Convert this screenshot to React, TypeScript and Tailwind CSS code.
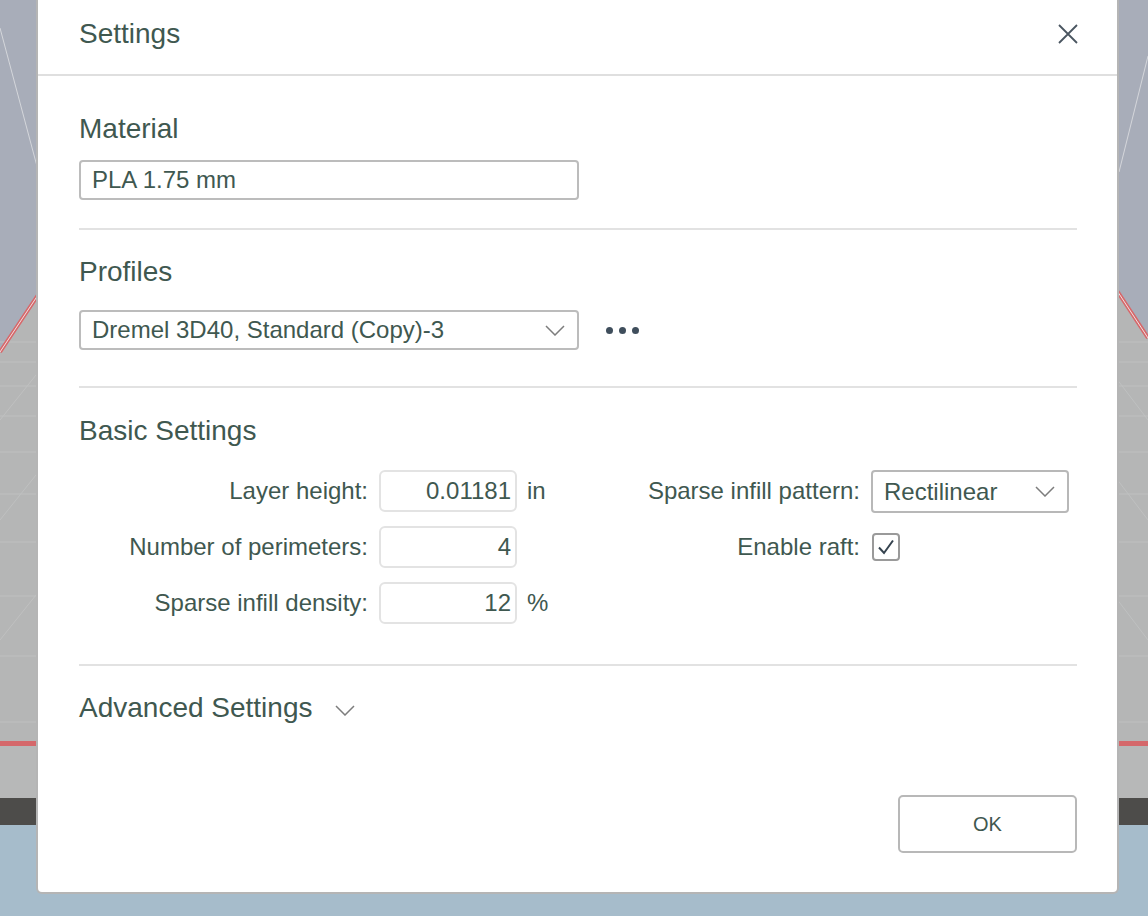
import React from "react";

const TEXT = "text-[#3f5850]";

function Chevron({ className = "" }: { className?: string }) {
  return (
    <svg width="20" height="11" viewBox="0 0 20 11" className={className}>
      <path d="M1 1 L10 10 L19 1" fill="none" stroke="#7d7d7d" strokeWidth="1.5" />
    </svg>
  );
}

function Background() {
  const hLines = [322, 342, 366, 396, 432, 474, 522, 576, 636, 702];
  return (
    <svg className="absolute inset-0" width="1148" height="916" viewBox="0 0 1148 916">
      <rect x="0" y="0" width="1148" height="916" fill="#a8adb9" />
      <polygon points="0,352 40,292 40,742 0,742" fill="#b5b6b6" />
      <polygon points="1110,280 1148,338 1148,742 1110,742" fill="#b5b6b6" />
      {hLines.map((y) => (
        <g key={y}>
          <line x1="0" y1={y + 20} x2="40" y2={y + 20} stroke="#bfc0c0" strokeWidth="1" />
          <line x1="1110" y1={y + 20} x2="1148" y2={y + 20} stroke="#bfc0c0" strokeWidth="1" />
        </g>
      ))}
      {[420, 520, 640].map((y) => (
        <g key={"d" + y}>
          <line x1="0" y1={y} x2="40" y2={y - 50} stroke="#bfc0c0" strokeWidth="1" />
          <line x1="1110" y1={y - 50} x2="1148" y2={y} stroke="#bfc0c0" strokeWidth="1" />
        </g>
      ))}
      <line x1="0" y1="352" x2="40" y2="292" stroke="#d7676a" strokeWidth="4" />
      <line x1="0" y1="352" x2="40" y2="292" stroke="#efe2e2" strokeWidth="1" />
      <line x1="1110" y1="280" x2="1148" y2="338" stroke="#d7676a" strokeWidth="4" />
      <line x1="1110" y1="280" x2="1148" y2="338" stroke="#efe2e2" strokeWidth="1" />
      <line x1="0" y1="28" x2="38" y2="170" stroke="#d4d6db" strokeWidth="1" />
      <line x1="1148" y1="56" x2="1119" y2="172" stroke="#d4d6db" strokeWidth="1" />
      <rect x="0" y="741" width="1148" height="5" fill="#d5686b" />
      <rect x="0" y="746" width="1148" height="52" fill="#b7b8b8" />
      <rect x="0" y="798" width="1148" height="27" fill="#4d4c4a" />
      <rect x="0" y="825" width="1148" height="91" fill="#a6bccb" />
    </svg>
  );
}

function Field({ value }: { value: string }) {
  return (
    <div
      className={`flex h-[42px] w-[138px] items-center justify-end rounded-[6px] border-2 border-[#e3e3e3] pr-[4px] text-[24px] leading-none ${TEXT}`}
    >
      {value}
    </div>
  );
}

export default function App() {
  return (
    <div className="relative h-[916px] w-[1148px] overflow-hidden [font-family:'Liberation_Sans',Arial,sans-serif]">
      <Background />
      <div className="relative ml-[36px] flex h-[894px] w-[1083px] flex-col rounded-b-[6px] border-x-2 border-b-2 border-[#b5b5b5] bg-white">
        <div className="flex h-[76px] items-start justify-between border-b-2 border-[#dfdfdf] pl-[41px] pr-[38px]">
          <div className={`mt-[20px] text-[28px] leading-[28px] ${TEXT}`}>Settings</div>
          <svg width="22" height="22" viewBox="0 0 22 22" className="mt-[23px]">
            <path d="M2 2 L20 20 M20 2 L2 20" stroke="#4a5560" strokeWidth="1.8" fill="none" />
          </svg>
        </div>

        <div className="flex flex-1 flex-col pl-[41px] pr-[40px]">
          <div className={`mt-[39px] text-[28px] leading-[28px] ${TEXT}`}>Material</div>
          <div
            className={`mt-[17px] flex h-[40px] w-[500px] items-center rounded-[4px] border-2 border-[#bcbcbc] pl-[11px] text-[24px] leading-none ${TEXT}`}
          >
            PLA 1.75 mm
          </div>
          <div className="mt-[28px] h-[2px] bg-[#e2e2e2]" />

          <div className={`mt-[28px] text-[28px] leading-[28px] ${TEXT}`}>Profiles</div>
          <div className="mt-[24px] flex items-center">
            <div
              className={`flex h-[40px] w-[500px] items-center justify-between rounded-[4px] border-2 border-[#bcbcbc] pl-[11px] pr-[12px] text-[24px] leading-none ${TEXT}`}
            >
              <span>Dremel 3D40, Standard (Copy)-3</span>
              <Chevron />
            </div>
            <div className="ml-[27px] flex items-center gap-[6px]">
              <span className="h-[7px] w-[7px] rounded-full bg-[#3f4e5c]" />
              <span className="h-[7px] w-[7px] rounded-full bg-[#3f4e5c]" />
              <span className="h-[7px] w-[7px] rounded-full bg-[#3f4e5c]" />
            </div>
          </div>
          <div className="mt-[36px] h-[2px] bg-[#e2e2e2]" />

          <div className={`mt-[29px] text-[28px] leading-[28px] ${TEXT}`}>Basic Settings</div>
          <div
            className={`mt-[25px] grid grid-cols-[300px_138px_1fr_auto_198px] grid-rows-[42px_42px_42px] gap-y-[14px] pr-[8px] text-[24px] leading-none ${TEXT}`}
          >
            <div className="flex items-center justify-end pr-[11px]">Layer height:</div>
            <Field value="0.01181" />
            <div className="flex items-center pl-[10px]">in</div>
            <div className="flex items-center justify-end pr-[11px]">Sparse infill pattern:</div>
            <div className="flex h-[43px] w-[198px] items-center justify-between rounded-[4px] border-2 border-[#b8b8b8] pl-[11px] pr-[12px]">
              <span>Rectilinear</span>
              <Chevron />
            </div>

            <div className="flex items-center justify-end pr-[11px]">Number of perimeters:</div>
            <Field value="4" />
            <div />
            <div className="flex items-center justify-end pr-[11px]">Enable raft:</div>
            <div className="flex items-center">
              <div className="ml-[1px] flex h-[28px] w-[28px] items-center justify-center rounded-[4px] border-2 border-[#9a9a9a]">
                <svg width="18" height="16" viewBox="0 0 18 16">
                  <path d="M2 8.5 L7 14 L16 1.5" fill="none" stroke="#34424e" strokeWidth="2" />
                </svg>
              </div>
            </div>

            <div className="flex items-center justify-end pr-[11px]">Sparse infill density:</div>
            <Field value="12" />
            <div className="flex items-center pl-[10px]">%</div>
            <div />
            <div />
          </div>
          <div className="mt-[40px] h-[2px] bg-[#e2e2e2]" />

          <div className="mt-[28px] flex items-center">
            <span className={`text-[28px] leading-[28px] ${TEXT}`}>Advanced Settings</span>
            <Chevron className="ml-[22px] mt-[4px]" />
          </div>

          <div className="mb-[39px] mt-auto flex justify-end">
            <button
              className={`h-[58px] w-[179px] rounded-[5px] border-2 border-[#b8b8b8] text-[20px] leading-none ${TEXT}`}
            >
              OK
            </button>
          </div>
        </div>
      </div>
    </div>
  );
}
